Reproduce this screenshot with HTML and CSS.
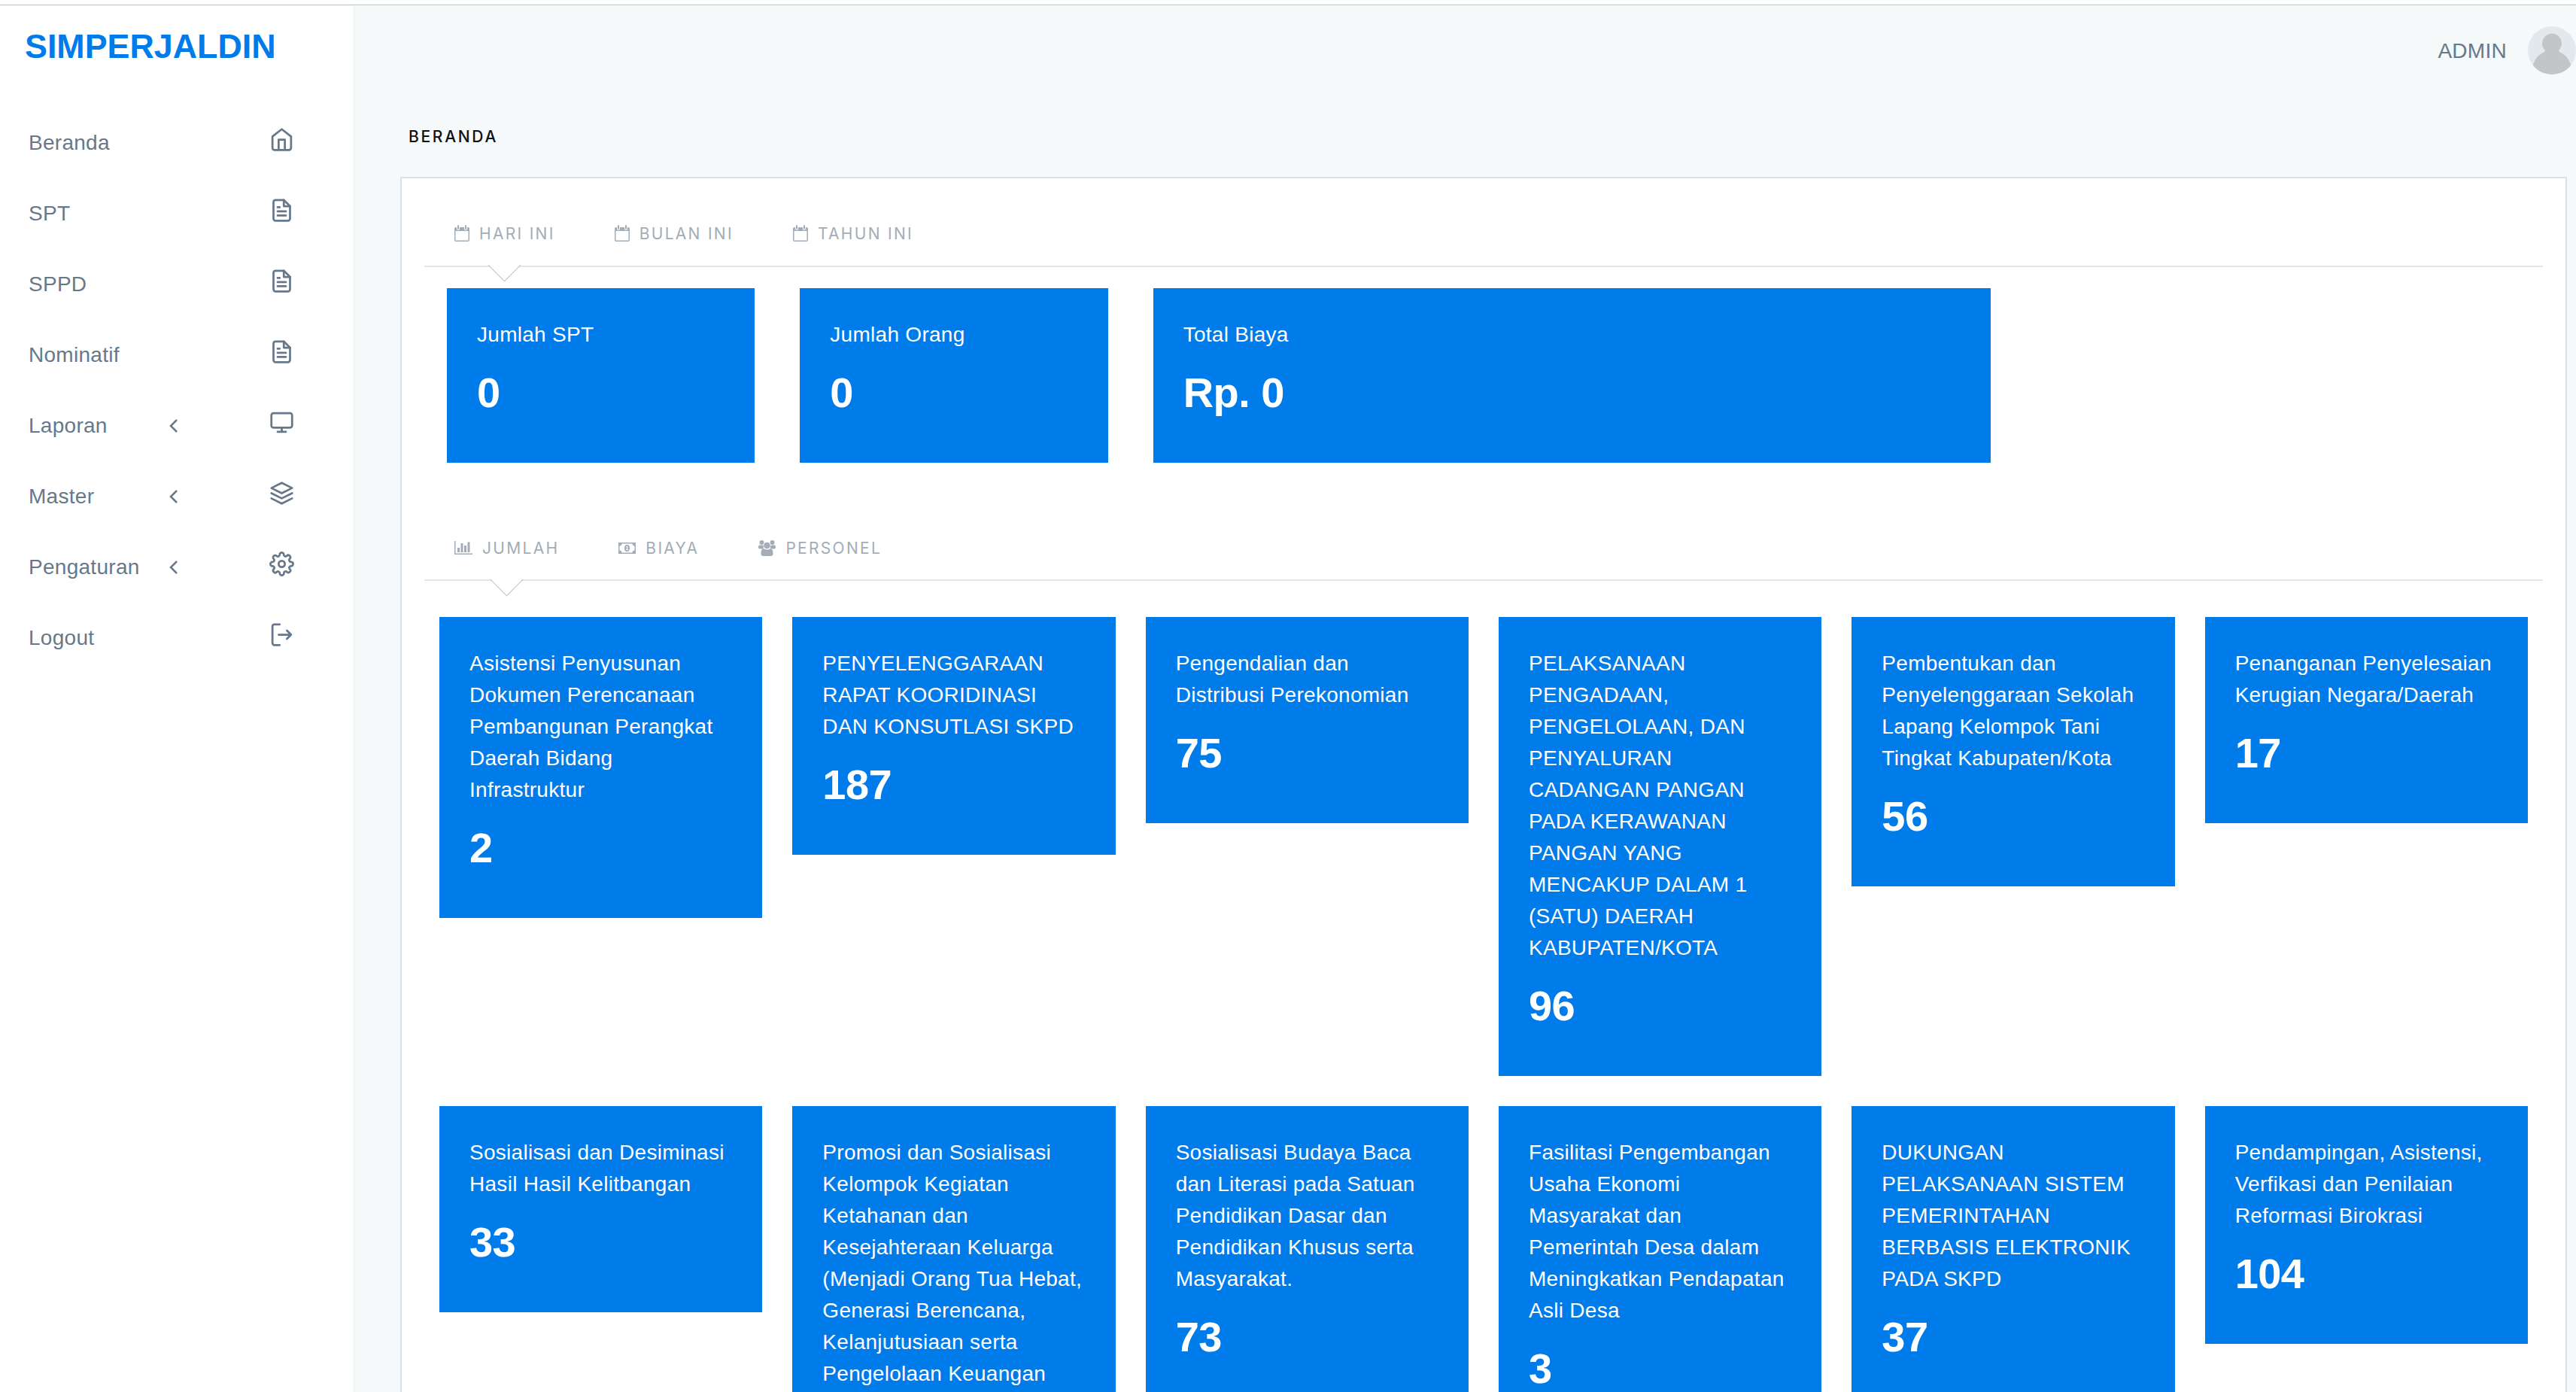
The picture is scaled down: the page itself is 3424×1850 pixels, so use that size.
FILE: index.html
```html
<!DOCTYPE html>
<html lang="id">
<head>
    <meta charset="UTF-8">
    <meta name="viewport" content="width=device-width, initial-scale=1.0">
    <title>SIMPERJALDIN</title>
    <link rel="stylesheet" href="styles.css">
</head>
<body>

    <svg class="sprite">
        <symbol id="home" viewBox="0 0 24 24"><path d="M3 9l9-7 9 7v11a2 2 0 0 1-2 2H5a2 2 0 0 1-2-2z"/><path d="M9 22V12h6v10"/></symbol>
        <symbol id="file" viewBox="0 0 24 24"><path d="M14 2H6a2 2 0 0 0-2 2v16a2 2 0 0 0 2 2h12a2 2 0 0 0 2-2V8z"/><path d="M14 2v6h6M16 13H8M16 17H8M10 9H8"/></symbol>
        <symbol id="monitor" viewBox="0 0 24 24"><rect x="2" y="3" width="20" height="14" rx="2"/><path d="M8 21h8M12 17v4"/></symbol>
        <symbol id="layers" viewBox="0 0 24 24"><path d="M12 2L2 7l10 5 10-5zM2 17l10 5 10-5M2 12l10 5 10-5"/></symbol>
        <symbol id="settings" viewBox="0 0 24 24"><circle cx="12" cy="12" r="3"/><path d="M19.4 15a1.65 1.65 0 0 0 .33 1.82l.06.06a2 2 0 0 1-2.83 2.83l-.06-.06a1.65 1.65 0 0 0-2.8 1.17V21a2 2 0 0 1-4 0v-.09A1.65 1.65 0 0 0 9 19.4a1.65 1.65 0 0 0-1.82.33l-.06.06a2 2 0 0 1-2.83-2.83l.06-.06a1.65 1.65 0 0 0-1.17-2.8H3a2 2 0 0 1 0-4h.09A1.65 1.65 0 0 0 4.6 9a1.65 1.65 0 0 0-.33-1.82l-.06-.06a2 2 0 0 1 2.83-2.83l.06.06A1.65 1.65 0 0 0 9 4.6a1.65 1.65 0 0 0 1-1.51V3a2 2 0 0 1 4 0v.09a1.65 1.65 0 0 0 2.8 1.17l.06-.06a2 2 0 0 1 2.83 2.83l-.06.06A1.65 1.65 0 0 0 19.4 9a1.65 1.65 0 0 0 1.51 1H21a2 2 0 0 1 0 4h-.09a1.65 1.65 0 0 0-1.51 1z"/></symbol>
        <symbol id="logout" viewBox="0 0 24 24"><path d="M10 22H5a2 2 0 0 1-2-2V4a2 2 0 0 1 2-2h5M17 16l4-4-4-4M21 12H9"/></symbol>
        <symbol id="chevron" viewBox="0 0 12 18"><path d="M10 1L2 9l8 8"/></symbol>
        <symbol id="calendar" viewBox="0 0 20 22"><path d="M2 3h1v2a2 2 0 0 0 4 0V3h6v2a2 2 0 0 0 4 0V3h1a2 2 0 0 1 2 2v15a2 2 0 0 1-2 2H2a2 2 0 0 1-2-2V5a2 2 0 0 1 2-2zM1.5 8v12.5h17V8zM4 1a1 1 0 0 1 2 0v4a1 1 0 0 1-2 0zM14 1a1 1 0 0 1 2 0v4a1 1 0 0 1-2 0z" fill-rule="evenodd"/></symbol>
        <symbol id="chart" viewBox="0 0 24 18"><path d="M0 0h1.5v16.500H24V18H0zM4 9h3v6H4zM8.500 3h3v12h-3zM13 6h3v9h-3zM17.500 1.500h3V15h-3z"/></symbol>
        <symbol id="money" viewBox="0 0 23 15"><path d="M0 0h23v15H0zM4.500 1.500a3 3 0 0 1-3 3v6a3 3 0 0 1 3 3h14a3 3 0 0 1 3-3v-6a3 3 0 0 1-3-3zM11.500 3a3.500 4.500 0 0 1 0 9a3.500 4.500 0 0 1 0-9zM10 6h1v3h-1v1h3.200V9h-1V4.800h-1z" fill-rule="evenodd"/></symbol>
        <symbol id="users" viewBox="0 0 23 21"><circle cx="4.500" cy="3" r="3"/><circle cx="18.500" cy="3" r="3"/><circle cx="11.500" cy="7" r="4.300"/><rect x="0" y="6.500" width="7" height="5" rx="2"/><rect x="16" y="6.500" width="7" height="5" rx="2"/><path d="M7 11c3 2 6 2 9 0 2 0 3.500 2 3.500 7 0 2-1 3-3 3h-10c-2 0-3-1-3-3 0-5 1.500-7 3.500-7z"/></symbol>
    </svg>

    <div class="top-bar"></div>

    <div class="layout">
        <div class="sidebar">
            <div class="brand">SIMPERJALDIN</div>
            <div class="menu">
                <div class="menu-item">Beranda<svg class="menu-icon"><use href="#home"/></svg></div>
                <div class="menu-item">SPT<svg class="menu-icon"><use href="#file"/></svg></div>
                <div class="menu-item">SPPD<svg class="menu-icon"><use href="#file"/></svg></div>
                <div class="menu-item">Nominatif<svg class="menu-icon"><use href="#file"/></svg></div>
                <div class="menu-item"><span class="menu-label">Laporan</span><svg class="chevron"><use href="#chevron"/></svg><svg class="menu-icon"><use href="#monitor"/></svg></div>
                <div class="menu-item"><span class="menu-label">Master</span><svg class="chevron"><use href="#chevron"/></svg><svg class="menu-icon"><use href="#layers"/></svg></div>
                <div class="menu-item"><span class="menu-label">Pengaturan</span><svg class="chevron"><use href="#chevron"/></svg><svg class="menu-icon"><use href="#settings"/></svg></div>
                <div class="menu-item">Logout<svg class="menu-icon"><use href="#logout"/></svg></div>
            </div>
        </div>

        <div class="main">
            <div class="header">
                <span class="user">ADMIN</span>
                <svg class="avatar" viewBox="0 0 64 64">
                    <clipPath id="round"><circle cx="32" cy="32" r="32"/></clipPath>
                    <g clip-path="url(#round)">
                        <rect width="64" height="64" fill="#e3e8ed"/>
                        <path d="M19 23a13 13 0 1 1 22 9c0 2 3 3 6 5 5 3 8 8 10 14v13H7V51c2-6 5-11 10-14 3-2 6-3 6-5a13 13 0 0 1-4-9z" fill="#c3c5c9"/>
                    </g>
                </svg>
            </div>
            <div class="page-title">BERANDA</div>

            <div class="panel">
                <div class="tabs">
                    <div class="tab active"><svg class="tab-icon calendar"><use href="#calendar"/></svg>HARI INI</div>
                    <div class="tab"><svg class="tab-icon calendar"><use href="#calendar"/></svg>BULAN INI</div>
                    <div class="tab"><svg class="tab-icon calendar"><use href="#calendar"/></svg>TAHUN INI</div>
                </div>
                <div class="summary">
                    <div class="card"><div class="card-title">Jumlah SPT</div><div class="card-value">0</div></div>
                    <div class="card"><div class="card-title">Jumlah Orang</div><div class="card-value">0</div></div>
                    <div class="card wide"><div class="card-title">Total Biaya</div><div class="card-value">Rp. 0</div></div>
                </div>

                <div class="tabs tabs-detail">
                    <div class="tab active"><svg class="tab-icon chart"><use href="#chart"/></svg>JUMLAH</div>
                    <div class="tab"><svg class="tab-icon money"><use href="#money"/></svg>BIAYA</div>
                    <div class="tab"><svg class="tab-icon users"><use href="#users"/></svg>PERSONEL</div>
                </div>
                <div class="cards">
                    <div class="card"><div class="card-title">Asistensi Penyusunan Dokumen Perencanaan Pembangunan Perangkat Daerah Bidang Infrastruktur</div><div class="card-value">2</div></div>
                    <div class="card"><div class="card-title">PENYELENGGARAAN RAPAT KOORIDINASI DAN KONSUTLASI SKPD</div><div class="card-value">187</div></div>
                    <div class="card"><div class="card-title">Pengendalian dan Distribusi Perekonomian</div><div class="card-value">75</div></div>
                    <div class="card"><div class="card-title">PELAKSANAAN PENGADAAN, PENGELOLAAN, DAN PENYALURAN CADANGAN PANGAN PADA KERAWANAN PANGAN YANG MENCAKUP DALAM 1 (SATU) DAERAH KABUPATEN/KOTA</div><div class="card-value">96</div></div>
                    <div class="card"><div class="card-title">Pembentukan dan Penyelenggaraan Sekolah Lapang Kelompok Tani Tingkat Kabupaten/Kota</div><div class="card-value">56</div></div>
                    <div class="card"><div class="card-title">Penanganan Penyelesaian Kerugian Negara/Daerah</div><div class="card-value">17</div></div>

                    <div class="card"><div class="card-title">Sosialisasi dan Desiminasi Hasil Hasil Kelitbangan</div><div class="card-value">33</div></div>
                    <div class="card"><div class="card-title">Promosi dan Sosialisasi Kelompok Kegiatan Ketahanan dan Kesejahteraan Keluarga (Menjadi Orang Tua Hebat, Generasi Berencana, Kelanjutusiaan serta Pengelolaan Keuangan</div></div>
                    <div class="card"><div class="card-title">Sosialisasi Budaya Baca dan Literasi pada Satuan Pendidikan Dasar dan Pendidikan Khusus serta Masyarakat.</div><div class="card-value">73</div></div>
                    <div class="card"><div class="card-title">Fasilitasi Pengembangan Usaha Ekonomi Masyarakat dan Pemerintah Desa dalam Meningkatkan Pendapatan Asli Desa</div><div class="card-value">3</div></div>
                    <div class="card"><div class="card-title">DUKUNGAN PELAKSANAAN SISTEM PEMERINTAHAN BERBASIS ELEKTRONIK PADA SKPD</div><div class="card-value">37</div></div>
                    <div class="card"><div class="card-title">Pendampingan, Asistensi, Verfikasi dan Penilaian Reformasi Birokrasi</div><div class="card-value">104</div></div>
                </div>
            </div>
        </div>
    </div>

</body>
</html>
```
FILE: styles.css
```css
* {
    box-sizing: border-box;
}
body {
    margin: 0;
    height: 100vh;
    overflow: hidden;
    display: flex;
    flex-direction: column;
    font-family: "Liberation Sans", Arial, sans-serif;
    font-size: 28px;
    letter-spacing: 0.01em;
    color: #67788a;
    background-color: #f5f9fa;
}
.sprite {
    display: none;
}
.top-bar {
    flex: none;
    height: 7px;
    background-color: white;
    border-bottom: 1px solid #c5c9cb;
}
.layout {
    display: flex;
    flex: 1;
    min-height: 0;
}
.sidebar {
    width: 471px;
    padding-top: 28px;
    background-color: white;
    border-top: 1px solid #eef3f5;
    border-right: 1px solid #edf1f3;
}
.brand {
    padding-left: 33px;
    line-height: 50px;
    font-size: 44.8px;
    font-weight: bold;
    letter-spacing: 0;
    color: #007bea;
}
.menu {
    margin-top: 57px;
}
.menu-item {
    display: flex;
    align-items: center;
    height: 94px;
    padding: 0 79px 0 38px;
}
.menu-label {
    width: 187px;
}
.menu-icon {
    width: 33px;
    height: 33px;
    margin: 0 0 9px auto;
    fill: none;
    stroke: currentColor;
    stroke-width: 2;
    stroke-linecap: round;
    stroke-linejoin: round;
}
.chevron {
    width: 12px;
    height: 18px;
    fill: none;
    stroke: currentColor;
    stroke-width: 2.5;
}
.main {
    flex: 1;
    display: flex;
    flex-direction: column;
    min-height: 0;
    padding: 28px 0 0 61px;
}
.header {
    flex: none;
    display: flex;
    justify-content: flex-end;
    align-items: center;
    gap: 28px;
    height: 64px;
}
.user {
    padding-top: 2px;
}
.avatar {
    width: 64px;
    height: 64px;
}
.page-title {
    flex: none;
    height: 136px;
    padding: 68px 0 0 11px;
    font-family: Inter, sans-serif;
    font-size: 21px;
    font-weight: 500;
    line-height: 30px;
    letter-spacing: 2.7px;
    color: #0b1114;
}
.panel {
    flex: 1;
    min-height: 0;
    overflow: hidden;
    margin-right: 12px;
    padding: 0 30px;
    background-color: white;
    border: 2px solid #d6e2ea;
    border-bottom: none;
}
.tabs {
    display: flex;
    gap: 79px;
    height: 118px;
    padding: 56px 0 0 40px;
    border-bottom: 2px solid #e1e7ea;
}
.tab {
    position: relative;
    display: flex;
    align-items: center;
    height: 34px;
    font-family: Inter, sans-serif;
    font-size: 21px;
    letter-spacing: 2.3px;
    color: #a2adb7;
}
.tab-icon {
    fill: currentColor;
    margin-right: 13px;
}
.calendar {
    width: 20px;
    height: 22px;
}
.chart {
    width: 24px;
    height: 18px;
}
.money {
    width: 23px;
    height: 15px;
}
.users {
    width: 23px;
    height: 21px;
}
/* pointer under the selected tab */
.tab.active::after {
    content: "";
    position: absolute;
    left: 50%;
    top: 44px;
    width: 30px;
    height: 30px;
    margin-left: -16px;
    background: linear-gradient(135deg, transparent 49%, white 49%);
    border-right: 1.5px solid #bcc3c9;
    border-bottom: 1.5px solid #bcc3c9;
    transform: rotate(45deg);
}
.summary {
    display: grid;
    grid-template-columns: repeat(12, 1fr);
    gap: 60px;
    padding: 28px 30px 0;
}
.summary .card {
    grid-column: span 2;
}
.summary .card.wide {
    grid-column: span 5;
}
.tabs-detail {
    height: 157px;
    padding-top: 96px;
}
.cards {
    display: grid;
    grid-template-columns: repeat(6, 1fr);
    align-items: start;
    gap: 40px;
    padding: 48px 20px 0;
}
.card {
    min-width: 0;
    padding: 41px 39px 40px 40px;
    background-color: #007bea;
    color: white;
}
.card-title {
    line-height: 42px;
}
.card-value {
    margin: 21px 0 18px;
    font-size: 56px;
    font-weight: bold;
    line-height: 70px;
    letter-spacing: -0.01em;
}
```
